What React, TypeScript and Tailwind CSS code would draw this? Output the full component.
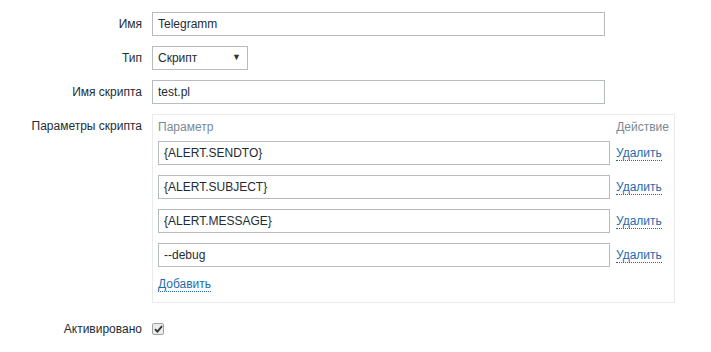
const FONT = "font-['Liberation_Sans',Arial,sans-serif]"

const params = ['{ALERT.SENDTO}', '{ALERT.SUBJECT}', '{ALERT.MESSAGE}', '--debug']

function Label({ children }: { children: React.ReactNode }) {
  return <div className="w-[142px] shrink-0 text-right">{children}</div>
}

function TextBox({ value, width }: { value: string; width: string }) {
  return (
    <div
      className={`${width} h-[24px] border border-[#b7bcbf] bg-white px-[5px] leading-[22px] text-[#1f2c33]`}
    >
      {value}
    </div>
  )
}

function Link({ children }: { children: React.ReactNode }) {
  return (
    <span className="border-b border-dotted border-[#1f6bab] leading-[14px] text-[#1f6bab]">
      {children}
    </span>
  )
}

export default function App() {
  return (
    <div className={`${FONT} h-[352px] w-[711px] bg-white pt-[12px] text-[12px] text-[#1f2c33]`}>
      {/* Имя */}
      <div className="flex items-center gap-[10px]">
        <Label>Имя</Label>
        <TextBox value="Telegramm" width="w-[453px]" />
      </div>

      {/* Тип */}
      <div className="mt-[10px] flex items-center gap-[10px]">
        <Label>Тип</Label>
        <div className="flex h-[24px] w-[96px] items-center justify-between border border-[#b7bcbf] bg-white pl-[5px] pr-[6px]">
          <span>Скрипт</span>
          <span className="text-[9px] text-[#333]">▼</span>
        </div>
      </div>

      {/* Имя скрипта */}
      <div className="mt-[10px] flex items-center gap-[10px]">
        <Label>Имя скрипта</Label>
        <TextBox value="test.pl" width="w-[453px]" />
      </div>

      {/* Параметры скрипта */}
      <div className="mt-[10px] flex items-start gap-[10px]">
        <div className="w-[142px] shrink-0 pt-[5px] text-right leading-[14px]">Параметры скрипта</div>
        <div className="w-[523px] border border-[#e8ebec] p-[5px]">
          <div className="flex h-[14px] items-center justify-between leading-[14px] text-[#7a8a94]">
            <span>Параметр</span>
            <span>Действие</span>
          </div>
          <div className="mt-[7px] flex flex-col gap-[10px]">
            {params.map(p => (
              <div key={p} className="flex items-center gap-[6px]">
                <TextBox value={p} width="w-[452px]" />
                <Link>Удалить</Link>
              </div>
            ))}
          </div>
          <div className="mt-[10px] mb-[6px] h-[14px] leading-[14px]">
            <Link>Добавить</Link>
          </div>
        </div>
      </div>

      {/* Активировано */}
      <div className="mt-[14px] flex h-[24px] items-center gap-[10px]">
        <Label>Активировано</Label>
        <div className="flex h-[12px] w-[12px] items-center justify-center rounded-[2px] border border-[#9ea3a6] bg-[#e9ebec]">
          <svg width="9" height="8" viewBox="0 0 9 8">
            <path d="M1 4.2 L3.4 6.6 L8 1.2" fill="none" stroke="#333" strokeWidth="1.8" />
          </svg>
        </div>
      </div>
    </div>
  )
}
